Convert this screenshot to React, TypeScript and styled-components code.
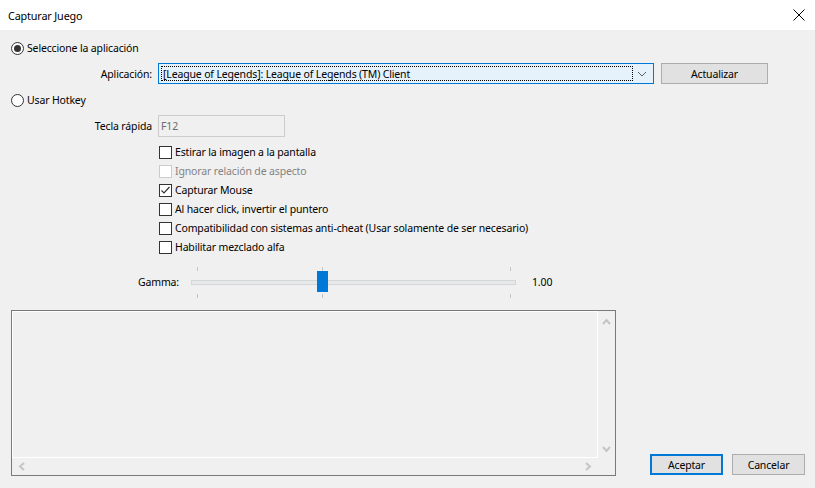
import styled, { createGlobalStyle } from "styled-components";

const Global = createGlobalStyle`
  html, body {
    margin: 0;
    padding: 0;
    background: #f0f0f0;
  }
  body {
    font-family: "Segoe UI", "Noto Sans", sans-serif;
    font-size: 10.5px;
    letter-spacing: -0.15px;
    color: #000;
  }
`;

const Window = styled.div`
  width: 815px;
  height: 488px;
  display: flex;
  flex-direction: column;
  background: #f0f0f0;
  overflow: hidden;
`;

const TitleBar = styled.div`
  height: 30px;
  flex: none;
  background: #fff;
  display: flex;
  align-items: center;
  justify-content: space-between;
  padding: 0 8px 0 8px;
  font-size: 10.8px;
`;

const CloseIcon = styled.svg`
  width: 12px;
  height: 12px;
  margin-right: 2px;
`;

const Body = styled.div`
  flex: 1;
  display: flex;
  flex-direction: column;
  padding: 11px 0 0 11px;
`;

const RadioRow = styled.label<{ $top: number }>`
  display: flex;
  align-items: center;
  gap: 3px;
  height: 14px;
  margin-top: ${(p) => p.$top}px;
`;

const RadioCircle = styled.span<{ $on?: boolean }>`
  width: 13px;
  height: 13px;
  box-sizing: border-box;
  border: 1px solid #333;
  border-radius: 50%;
  background: #fff;
  display: flex;
  align-items: center;
  justify-content: center;
  &::after {
    content: "";
    display: ${(p) => (p.$on ? "block" : "none")};
    width: 7px;
    height: 7px;
    border-radius: 50%;
    background: #333;
  }
`;

const FieldRow = styled.div<{ $top: number }>`
  display: flex;
  align-items: center;
  margin-top: ${(p) => p.$top}px;
`;

const FieldLabel = styled.div`
  width: 147px;
  box-sizing: border-box;
  padding-right: 6px;
  text-align: right;
`;

const Combo = styled.div`
  width: 496px;
  height: 21px;
  box-sizing: border-box;
  border: 1px solid #0078d7;
  background: #e5f1fb;
  display: flex;
  align-items: center;
  padding: 2px;
`;

const ComboText = styled.div`
  flex: 1;
  height: 100%;
  box-sizing: border-box;
  border: 1px dotted #000;
  display: flex;
  align-items: center;
  padding-left: 1px;
  white-space: nowrap;
`;

const ComboArrow = styled.svg`
  width: 17px;
  height: 15px;
  flex: none;
  margin-left: 1px;
`;

const Button = styled.div<{ $default?: boolean; $w: number }>`
  width: ${(p) => p.$w}px;
  height: 21px;
  box-sizing: border-box;
  border: ${(p) => (p.$default ? "2px solid #0078d7" : "1px solid #adadad")};
  background: #e1e1e1;
  display: flex;
  align-items: center;
  justify-content: center;
`;

const Spacer = styled.div`
  width: 7px;
`;

const TextBox = styled.div`
  width: 127px;
  height: 22px;
  box-sizing: border-box;
  border: 1px solid #cccccc;
  background: #f0f0f0;
  color: #6d6d6d;
  display: flex;
  align-items: center;
  padding-left: 2px;
`;

const CheckList = styled.div`
  display: flex;
  flex-direction: column;
  margin: 9px 0 0 148px;
`;

const CheckRow = styled.label<{ $disabled?: boolean }>`
  display: flex;
  gap: 3px;
  height: 19px;
  align-items: flex-start;
  color: ${(p) => (p.$disabled ? "#838383" : "#000")};
  line-height: 13px;
`;

const Box = styled.span<{ $disabled?: boolean }>`
  width: 13px;
  height: 13px;
  box-sizing: border-box;
  border: 1px solid ${(p) => (p.$disabled ? "#cccccc" : "#333")};
  background: #fff;
  flex: none;
  display: flex;
  align-items: center;
  justify-content: center;
`;

const GammaRow = styled.div`
  display: flex;
  align-items: center;
  height: 31px;
  margin-top: 7px;
`;

const GammaLabel = styled.div`
  width: 180px;
  box-sizing: border-box;
  padding-left: 127px;
  margin-top: -2px;
`;

const Slider = styled.div`
  position: relative;
  width: 325px;
  height: 31px;
  display: flex;
  align-items: center;
`;

const Track = styled.div`
  width: 100%;
  height: 5px;
  box-sizing: border-box;
  border: 1px solid #d6d6d6;
  background: #e7eaea;
`;

const Tick = styled.span<{ $x: number; $bottom?: boolean }>`
  position: absolute;
  left: ${(p) => p.$x}px;
  ${(p) => (p.$bottom ? "bottom: 0;" : "top: 0;")}
  width: 1px;
  height: 4px;
  background: #c4c4c4;
`;

const Thumb = styled.span`
  position: absolute;
  left: 126px;
  top: 4px;
  width: 11px;
  height: 21px;
  background: #0078d7;
`;

const GammaValue = styled.div`
  margin-left: 16px;
  margin-top: -2px;
`;

const Bottom = styled.div`
  display: flex;
  align-items: flex-end;
  margin-top: 12px;
`;

const ListBox = styled.div`
  width: 605px;
  height: 166px;
  box-sizing: border-box;
  border: 1px solid #7a7a7a;
  display: grid;
  grid-template-columns: 1fr 17px;
  grid-template-rows: 1fr 17px;
`;

const ListContent = styled.div`
  border: 1px solid #fff;
`;

const VScroll = styled.div`
  display: flex;
  flex-direction: column;
  justify-content: space-between;
  align-items: center;
  padding: 6px 0 4px;
`;

const HScroll = styled.div`
  display: flex;
  justify-content: space-between;
  align-items: center;
  padding: 0 6px 0 6px;
`;

const Chevron = styled.svg`
  width: 9px;
  height: 9px;
`;

const Buttons = styled.div`
  display: flex;
  gap: 9px;
  margin: 0 0 1px 34px;
`;

const checks = [
  { text: "Estirar la imagen a la pantalla" },
  { text: "Ignorar relación de aspecto", disabled: true },
  { text: "Capturar Mouse", checked: true },
  { text: "Al hacer click, invertir el puntero" },
  { text: "Compatibilidad con sistemas anti-cheat (Usar solamente de ser necesario)" },
  { text: "Habilitar mezclado alfa" },
];

function Chev({ dir }: { dir: "up" | "down" | "left" | "right" }) {
  const pts = {
    up: "1,7 4.5,3 8,7",
    down: "1,2 4.5,6 8,2",
    left: "6,1 2,4.5 6,8",
    right: "3,1 7,4.5 3,8",
  }[dir];
  return (
    <Chevron viewBox="0 0 9 9">
      <polyline points={pts} fill="none" stroke="#c5c5c5" strokeWidth="2" />
    </Chevron>
  );
}

export default function App() {
  return (
    <>
      <Global />
      <Window>
        <TitleBar>
          <span>Capturar Juego</span>
          <CloseIcon viewBox="0 0 12 12">
            <path d="M0.5 0.5 L11.5 11.5 M11.5 0.5 L0.5 11.5" stroke="#000" strokeWidth="1" />
          </CloseIcon>
        </TitleBar>
        <Body>
          <RadioRow $top={0}>
            <RadioCircle $on />
            Seleccione la aplicación
          </RadioRow>
          <FieldRow $top={8}>
            <FieldLabel>Aplicación:</FieldLabel>
            <Combo>
              <ComboText>[League of Legends]: League of Legends (TM) Client</ComboText>
              <ComboArrow viewBox="0 0 17 15">
                <polyline points="4,6 8,10 12,6" fill="none" stroke="#606060" strokeWidth="1" />
              </ComboArrow>
            </Combo>
            <Spacer />
            <Button $w={107}>Actualizar</Button>
          </FieldRow>
          <RadioRow $top={9}>
            <RadioCircle />
            Usar Hotkey
          </RadioRow>
          <FieldRow $top={8}>
            <FieldLabel>Tecla rápida</FieldLabel>
            <TextBox>F12</TextBox>
          </FieldRow>
          <CheckList>
            {checks.map((c) => (
              <CheckRow key={c.text} $disabled={c.disabled}>
                <Box $disabled={c.disabled}>
                  {c.checked && (
                    <svg width="11" height="11" viewBox="0 0 11 11">
                      <polyline points="1.5,5.5 4,8 9.5,2" fill="none" stroke="#333" strokeWidth="1.2" />
                    </svg>
                  )}
                </Box>
                {c.text}
              </CheckRow>
            ))}
          </CheckList>
          <GammaRow>
            <GammaLabel>Gamma:</GammaLabel>
            <Slider>
              <Tick $x={6} />
              <Tick $x={131} />
              <Tick $x={319} />
              <Tick $x={6} $bottom />
              <Tick $x={131} $bottom />
              <Tick $x={319} $bottom />
              <Track />
              <Thumb />
            </Slider>
            <GammaValue>1.00</GammaValue>
          </GammaRow>
          <Bottom>
            <ListBox>
              <ListContent />
              <VScroll>
                <Chev dir="up" />
                <Chev dir="down" />
              </VScroll>
              <HScroll>
                <Chev dir="left" />
                <Chev dir="right" />
              </HScroll>
              <div />
            </ListBox>
            <Buttons>
              <Button $default $w={73}>Aceptar</Button>
              <Button $w={73}>Cancelar</Button>
            </Buttons>
          </Bottom>
        </Body>
      </Window>
    </>
  );
}
